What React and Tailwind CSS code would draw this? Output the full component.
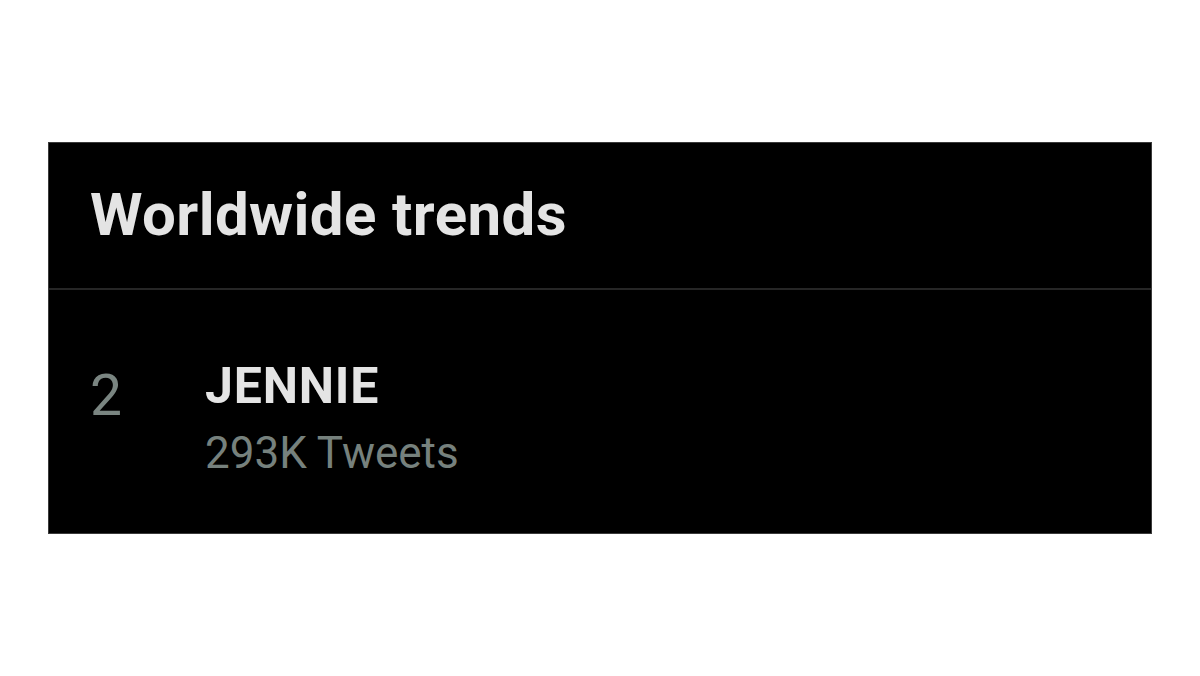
export default function App() {
  return (
    <div className="w-[1200px] h-[676px] bg-white pt-[142px] pl-[48px]" style={{ fontFamily: 'Roboto, "Liberation Sans", sans-serif' }}>
      <div className="w-[1104px] h-[392px] bg-black border border-[#3a3a3a] flex flex-col">
        <div className="h-[147px] flex items-start pt-[42px] pl-[41px] border-b-2 border-[#262626]">
          <span className="text-[60px] font-bold text-[#e4e4e4] leading-none tracking-[0.4px]">Worldwide trends</span>
        </div>
        <div className="flex items-start pl-[41px] pt-[71px]">
          <span className="w-[115px] text-[57px] text-[#7a8581] leading-none mt-[6px]">2</span>
          <div className="flex flex-col">
            <span className="text-[50px] font-bold text-[#e4e4e4] leading-none tracking-[0.8px]">JENNIE</span>
            <span className="text-[44px] text-[#76817d] leading-none mt-[20px]">293K Tweets</span>
          </div>
        </div>
      </div>
    </div>
  );
}
